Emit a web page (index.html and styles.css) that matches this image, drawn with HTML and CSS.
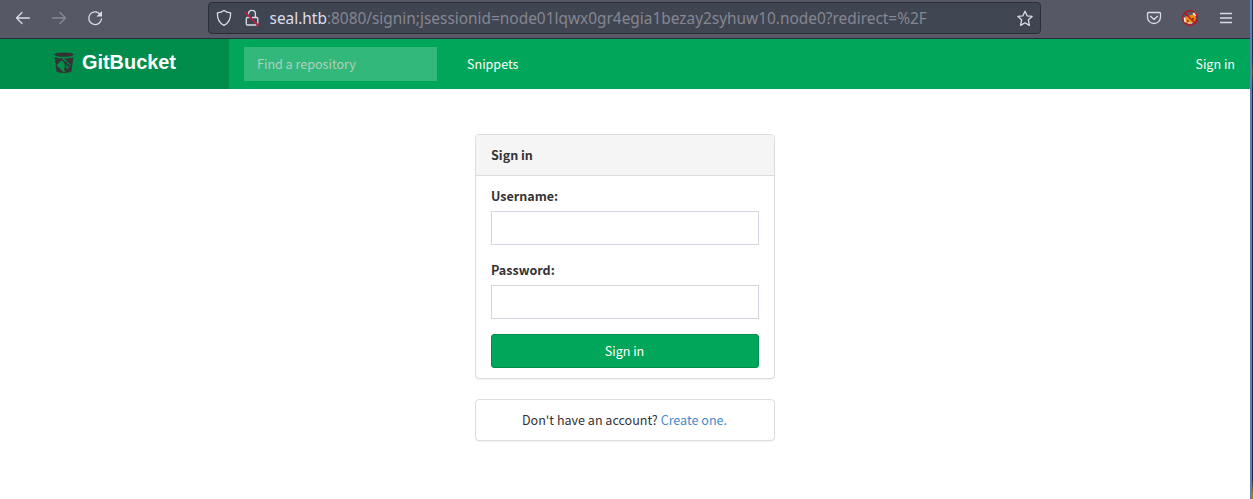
FILE: index.html
```html
<!DOCTYPE html>
<html lang="en">
<head>
<meta charset="utf-8">
<title>Sign in</title>
<link rel="stylesheet" href="styles.css">
</head>
<body>
<div class="window">
  <div class="browser">
    <div class="toolbar">
      <div class="nav-buttons">
        <svg width="16" height="16" viewBox="0 0 16 16" class="icon"><path d="M14.3 8H1.5M7 2.5L1.5 8L7 13.5"/></svg>
        <svg width="16" height="16" viewBox="0 0 16 16" class="icon dim"><path d="M1.5 8H14.3M9 2.5L14.5 8L9 13.5"/></svg>
        <svg width="16" height="16" viewBox="0 0 16 16" class="icon"><path d="M12.7 3.7A6.4 6.4 0 1 0 14.5 9"/><path class="solid" d="M15 1v5.6h-5.6z"/></svg>
      </div>
      <div class="address">
        <svg width="16" height="18" viewBox="0 0 16 18" class="icon"><path d="M8 1.4C6.2 2.8 3.8 3.6 1.4 3.8C1.2 9 2.8 14 8 16.4C13.2 14 14.8 9 14.6 3.8C12.2 3.6 9.8 2.8 8 1.4z"/></svg>
        <svg width="16" height="18" viewBox="0 0 16 18" class="icon lock"><path d="M4.6 4.8a3.4 3.4 0 0 1 6.800 0V8.500M8.500 8.500h4.300q1 0 1 1V14M12 16H3.300q-1 0-1-1V9.500q0-1 1-1H5"/><path class="slash" d="M1.200 3.500L14.200 16.500"/></svg>
        <div class="url"><span class="host">seal.htb</span>:8080/signin;jsessionid=node01lqwx0gr4egia1bezay2syhuw10.node0?redirect=%2F</div>
        <svg width="16" height="17" viewBox="0 0 16 17" class="icon"><path d="M8 1.200L10.100 5.800L15.100 6.400L11.400 9.800L12.400 15.400L8 12.700L3.600 15.400L4.600 9.800L.9 6.400L5.900 5.800z"/></svg>
      </div>
      <div class="tools">
        <svg width="16" height="16" viewBox="0 0 16 16" class="icon"><path d="M2.500 2.500h11a1 1 0 0 1 1 1V7a6.500 6.500 0 0 1-13 0V3.500a1 1 0 0 1 1-1zM4.500 6.300L8 9.500L11.500 6.300"/></svg>
        <svg width="16" height="16" viewBox="0 0 16 16"><path fill="#ea8a12" d="M3 7L7 5.500L12.500 4L14 8L12 12.500L7 14L3 12z"/><path fill="#eee6dc" d="M1.500 7l2 1L4 12.500L2 12zM10.500 3l3-1l1 4l-2.500-.5z"/><path fill="#703c18" d="M5 10l2 .5v1H5zM10 8h2v1.500h-2z"/><path fill="#eee6dc" d="M6 12.500h4v1H6z"/><circle cx="8" cy="8" r="7.300" fill="none" stroke="#bd1019" stroke-width="1.200"/><path d="M3 3l10 10" stroke="#bd1019" stroke-width="1.200"/></svg>
        <svg width="14" height="16" viewBox="0 0 14 16" class="icon menu"><path d="M1 3.500h12M1 8h12M1 12.500h12"/></svg>
      </div>
    </div>
    <div class="navbar">
      <div class="brand">
        <svg width="20" height="22" viewBox="0 0 20 22"><ellipse cx="10" cy="2.600" rx="9.800" ry="2.200" fill="#333"/><path fill="#333" d="M.6 5.200Q10 8 19.400 5.200L17.500 19.500Q10 22.500 2.500 19.500z"/><path fill="#008d4c" d="M9.500 6L17 13.300L9.800 20.500L2.500 13.300z"/><path d="M6.500 6.500L14.500 13.500M11.500 10.500V17.500" fill="none" stroke="#333" stroke-width="1.400"/><g fill="#333"><circle cx="11.500" cy="10.800" r="1.300"/><circle cx="11.500" cy="17.300" r="1.500"/><circle cx="14.500" cy="13.500" r="1.300"/></g></svg>
        <span class="brand-name">GitBucket</span>
      </div>
      <div class="search">Find a repository</div>
      <div class="snippets">Snippets</div>
      <div class="account">Sign in</div>
    </div>
    <div class="content">
      <div class="panel">
        <div class="panel-head">Sign in</div>
        <div class="panel-body">
          <label class="label" for="user">Username:</label>
          <input class="field" id="user" type="text">
          <label class="label" for="pass">Password:</label>
          <input class="field" id="pass" type="password">
          <button class="submit">Sign in</button>
        </div>
      </div>
      <div class="panel register">Don't have an account? <span class="link">Create one.</span></div>
    </div>
  </div>
  <div class="edge"></div>
</div>
</body>
</html>
```

FILE: styles.css
```css
* { box-sizing: border-box; }
body {
  margin: 0;
  background: #fff;
  color: #333;
  font: 12.55px/20px "Noto Sans CJK JP", sans-serif;
}
.window { display: flex; height: 499px; overflow: hidden; }
.browser { flex: 1; }
.edge {
  width: 3px;
  border-left: 2px solid #5b80b3;
  background: linear-gradient(#242a35 0 60px, #5a4d19 72px, #242a35 85px 480px, #b8780d 495px);
}
.toolbar {
  display: flex;
  align-items: center;
  height: 39px;
  padding: 0 17px 2px 15px;
  background: #575865;
  border-bottom: 1px solid #2b2d38;
}
.nav-buttons { display: flex; gap: 20px; width: 193px; }
.icon { display: block; fill: none; stroke: #dadce6; stroke-width: 1.3; stroke-linecap: round; stroke-linejoin: round; }
.dim { stroke: #888995; }
.solid { fill: #dadce6; stroke: none; }
.slash { stroke: #d9183f; stroke-width: 1.5; }
.lock { margin-left: 12px; }
.address {
  display: flex;
  align-items: center;
  width: 833px;
  height: 32px;
  padding: 0 7px;
  background: #404552;
  border: 1px solid #2b2e3a;
  border-radius: 4px;
}
.url {
  flex: 1;
  margin-left: 9.5px;
  padding-top: 2px;
  font: 15.42px/22px "Noto Sans", sans-serif;
  color: #858791;
  white-space: nowrap;
}
.host { color: #dddfe8; }
.tools { display: flex; align-items: center; gap: 20px; margin-left: auto; }
.tools .icon.menu { stroke-linecap: butt; margin-left: 1px; }
.navbar { display: flex; align-items: center; height: 50px; background: #00a65a; color: #fff; }
.brand {
  display: flex;
  width: 229px;
  height: 50px;
  padding: 13px 0 0 54px;
  gap: 8px;
  background: #008d4c;
}
.brand-name { font: bold 19.9px/20px "Liberation Sans", sans-serif; }
.search {
  width: 193px;
  height: 34px;
  margin-left: 15px;
  padding: 7px 13px;
  background: #33b87b;
  color: #b0cfbf;
}
.snippets { margin-left: 30px; }
.account { margin-left: auto; padding-right: 15px; }
.content { padding-top: 45px; }
.panel {
  width: 300px;
  margin: 0 auto 20px;
  background: #fff;
  border: 1px solid #ddd;
  border-radius: 4px;
  box-shadow: 0 1px 1px rgba(0, 0, 0, .05);
}
.panel-head {
  height: 41px;
  padding: 10px 15px;
  background: #f5f5f5;
  border-bottom: 1px solid #ddd;
  border-radius: 3px 3px 0 0;
  font-weight: bold;
}
.panel-body { padding: 10px 15px; }
.label { display: block; margin-bottom: 5px; font-weight: bold; }
.field {
  display: block;
  width: 100%;
  height: 34px;
  margin: 0 0 15px;
  background: #fff;
  border: 1px solid #d2d6de;
  border-radius: 0;
}
.submit {
  display: block;
  width: 100%;
  height: 34px;
  padding: 0 1px 0 0;
  background: #00a65a;
  border: 1px solid #008d4c;
  border-radius: 3px;
  color: #fff;
  font: inherit;
}
.register { padding: 10px 16px 10px 15px; text-align: center; }
.link { color: #428bca; }
```
